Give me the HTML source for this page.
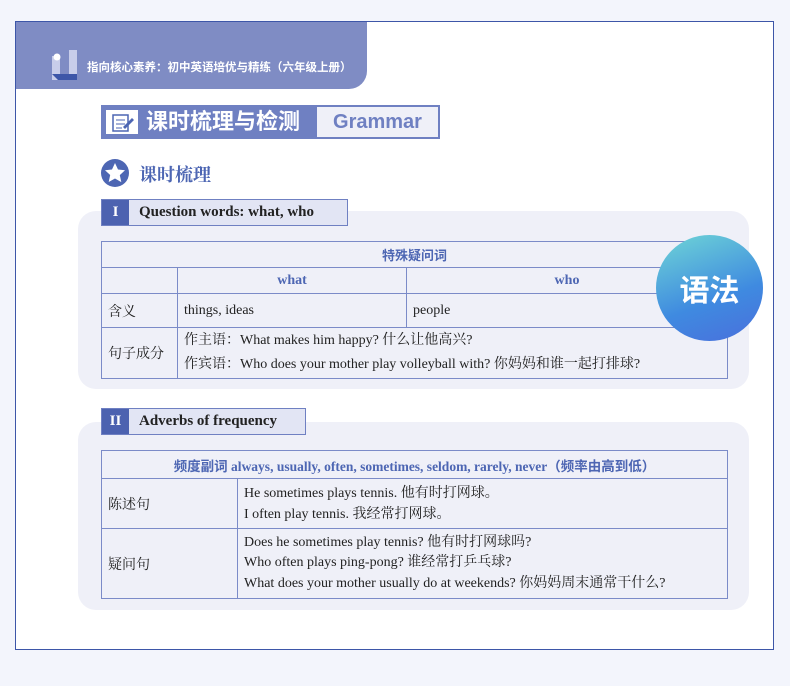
<!DOCTYPE html>
<html><head><meta charset="utf-8"><style>
*{margin:0;padding:0;box-sizing:border-box}
body{width:790px;height:686px;background:#f3f5fc;position:relative;overflow:hidden;font-family:"Liberation Serif","Noto Serif CJK SC",serif;color:#222}
.a{position:absolute}
.frame{left:15px;top:21px;width:759px;height:629px;background:#fff;border:1px solid #3d56a8}
.tab{left:16px;top:22px;width:351px;height:67px;background:#7f8cc4;border-bottom-right-radius:18px}
.tabt{left:87px;top:59px;font:bold 11.5px "Liberation Sans","Noto Sans CJK SC",sans-serif;color:#fff}
.title{left:101px;top:105px;width:339px;height:34px;border:2px solid #6f80c2;background:#6f80c2}
.panel{left:78px;background:#eff0f8;border-radius:18px;width:671px}
table{position:absolute;border-collapse:collapse;background:#eff0f8;font-size:14px}
td{border:1px solid #7b8bc8;padding:0 6px}
.h{color:#4d66b3;font-weight:bold;text-align:center;font-family:"Liberation Serif","Noto Sans CJK SC",serif}
.lab{height:27px;border:1px solid #6f80c2;background:#e2e5f4;font-weight:bold;font-size:15px;line-height:25px}
.lab b{display:inline-block;width:27px;background:#4c62b0;color:#fff;text-align:center;height:25px;margin-right:10px}
</style></head><body>
<div class="a frame"></div>
<div class="a tab"></div>
<svg class="a" style="left:52px;top:50px" width="30" height="34"><rect x="0" y="6" width="8" height="24" fill="#c8cdea"/><rect x="17" y="0" width="8" height="24" fill="#c8cdea"/><path d="M0 24h25v6H6z" fill="#3d56a8"/><circle cx="5" cy="7" r="3.5" fill="#fff"/></svg>
<div class="a tabt">指向核心素养：初中英语培优与精练（六年级上册）</div>
<div class="a title"><div class="a" style="left:2px;top:2px;width:34px;height:26px;background:#fff;border:1px solid #6f80c2"></div>
<svg class="a" style="left:8px;top:4px" width="24" height="22"><rect x="2" y="4" width="15" height="16" fill="none" stroke="#4d66b3" stroke-width="1.5"/><path d="M5 9h9M5 13h9M5 17h6" stroke="#4d66b3"/><path d="M12 16l9-9 2 2-9 9z" fill="#4d66b3"/></svg>
<div class="a" style="left:43px;top:0px;font:bold 22px 'Liberation Sans','Noto Sans CJK SC',sans-serif;color:#fff;line-height:30px">课时梳理与检测</div>
<div class="a" style="left:214px;top:0;width:121px;height:30px;background:#eff0f8;font:bold 20px 'Liberation Sans',sans-serif;color:#6f80c2;text-align:center;line-height:30px">Grammar</div></div>
<svg class="a" style="left:100px;top:158px" width="30" height="30"><circle cx="15" cy="15" r="14" fill="#4d66b3"/><path d="M15 5l3 6.5 7 .8-5.2 4.8 1.5 7L15 20.5 8.7 24l1.5-7L5 12.3l7-.8z" fill="#fff"/></svg>
<div class="a" style="left:139px;top:161px;font:bold 18px 'Noto Serif CJK SC',serif;color:#4d66b3">课时梳理</div>
<div class="a panel" style="top:211px;height:178px"></div>
<div class="a lab" style="left:101px;top:199px;width:247px"><b>I</b>Question words: what, who</div>
<table style="left:101px;top:241px;width:627px">
<tr style="height:26px"><td colspan="3" class="h" style="font-family:'Noto Sans CJK SC',sans-serif;font-size:13px">特殊疑问词</td></tr>
<tr style="height:26px"><td style="width:76px"></td><td class="h" style="width:229px">what</td><td class="h">who</td></tr>
<tr style="height:34px"><td>含义</td><td>things, ideas</td><td>people</td></tr>
<tr style="height:51px"><td>句子成分</td><td colspan="2" style="line-height:24px">作主语：What makes him happy? 什么让他高兴?<br>作宾语：Who does your mother play volleyball with? 你妈妈和谁一起打排球?</td></tr>
</table>
<div class="a" style="left:656px;top:235px;width:107px;height:106px;border-radius:50%;background:linear-gradient(160deg,#6fd6d6,#3f8ae0 60%,#4a6fdc);color:#fff;font:bold 30px 'Noto Sans CJK SC',sans-serif;text-align:center;line-height:106px">语法</div>
<div class="a panel" style="top:422px;height:188px"></div>
<div class="a lab" style="left:101px;top:408px;width:205px"><b>II</b>Adverbs of frequency</div>
<table style="left:101px;top:450px;width:627px">
<tr style="height:28px"><td colspan="2" class="h" style="font-size:13.5px">频度副词 always, usually, often, sometimes, seldom, rarely, never（频率由高到低）</td></tr>
<tr style="height:50px"><td style="width:136px">陈述句</td><td style="line-height:21px">He sometimes plays tennis. 他有时打网球。<br>I often play tennis. 我经常打网球。</td></tr>
<tr style="height:70px"><td>疑问句</td><td style="line-height:20.5px">Does he sometimes play tennis? 他有时打网球吗?<br>Who often plays ping-pong? 谁经常打乒乓球?<br>What does your mother usually do at weekends? 你妈妈周末通常干什么?</td></tr>
</table>
</body></html>
